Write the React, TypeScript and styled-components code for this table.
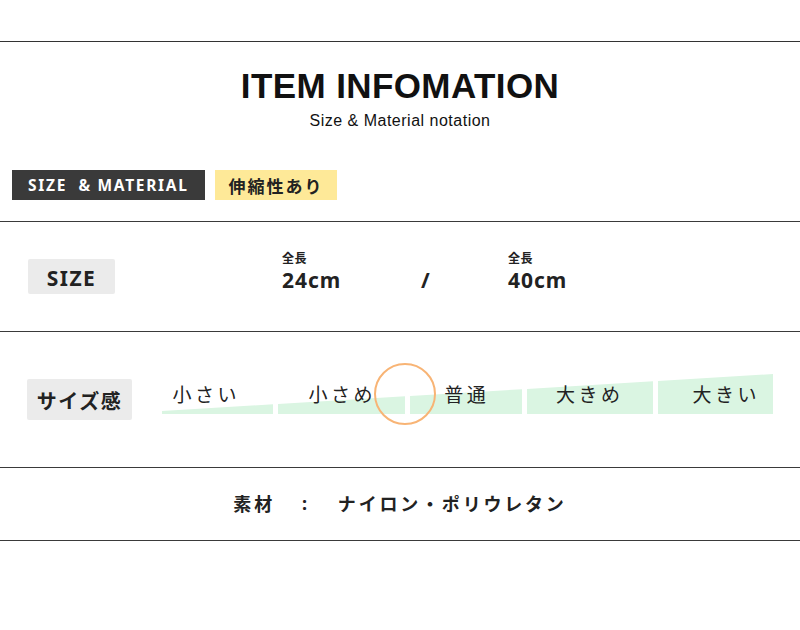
import React from 'react';
import styled, { createGlobalStyle } from 'styled-components';

const GlobalStyle = createGlobalStyle`
  body {
    margin: 0;
    background: #fff;
    font-family: 'Noto Sans', 'Noto Sans CJK JP', sans-serif;
    color: #222;
  }
`;

const Page = styled.div`
  width: 800px;
  padding-top: 41px;
`;

const Header = styled.header`
  border-top: 1px solid #333;
  border-bottom: 1px solid #3a3a3a;
  padding: 26px 0 21px;
`;

const Title = styled.h1`
  margin: 0;
  text-align: center;
  font-family: 'Liberation Sans', Arial, sans-serif;
  font-size: 35px;
  line-height: 1;
  font-weight: 700;
  letter-spacing: 0.4px;
  color: #111;
`;

const Subtitle = styled.p`
  margin: 10px 0 0;
  text-align: center;
  font-family: 'Liberation Sans', Arial, sans-serif;
  font-size: 16px;
  line-height: 1;
  letter-spacing: 0.5px;
  color: #111;
`;

const BadgeRow = styled.div`
  display: flex;
  gap: 10px;
  margin: 41px 0 0 12px;
`;

const Badge = styled.span<{ $tone: 'dark' | 'yellow' }>`
  display: inline-flex;
  align-items: center;
  height: 30px;
  padding: ${(p) => (p.$tone === 'dark' ? '0 16px' : '0 13px 0 14px')};
  background: ${(p) => (p.$tone === 'dark' ? '#3a3a3a' : '#fee998')};
  color: ${(p) => (p.$tone === 'dark' ? '#fff' : '#222')};
  font-weight: 700;
  font-size: ${(p) => (p.$tone === 'dark' ? '15.5px' : '17px')};
  letter-spacing: ${(p) => (p.$tone === 'dark' ? '1.7px' : '2px')};
  white-space: pre;
`;

const Row = styled.section<{ $height: number }>`
  display: flex;
  align-items: center;
  height: ${(p) => p.$height}px;
  border-bottom: 1px solid #3a3a3a;
`;

const Tag = styled.div<{ $width: number; $height: number; $left: number; $size: number }>`
  flex: none;
  display: flex;
  align-items: center;
  justify-content: center;
  width: ${(p) => p.$width}px;
  height: ${(p) => p.$height}px;
  margin-left: ${(p) => p.$left}px;
  padding-top: 2px;
  box-sizing: border-box;
  background: #ebebeb;
  border-radius: 2px;
  font-weight: 700;
  font-size: ${(p) => p.$size}px;
  letter-spacing: 1.5px;
  color: #222;
`;

const Values = styled.div`
  display: grid;
  grid-template-columns: 139px 87px auto;
  align-items: end;
  margin: -9px 0 0 167px;
`;

const Value = styled.div`
  display: flex;
  flex-direction: column;
`;

const ValueLabel = styled.span`
  font-size: 12px;
  font-weight: 700;
  line-height: 16px;
  letter-spacing: 0.5px;
`;

const ValueNumber = styled.span`
  font-size: 21px;
  font-weight: 700;
  line-height: 26px;
  letter-spacing: 1px;
`;

const Slash = styled.span`
  font-size: 21px;
  font-weight: 700;
  line-height: 26px;
`;

const Scale = styled.div`
  position: relative;
  align-self: flex-start;
  width: 611px;
  height: 40px;
  margin: 42px 0 0 30px;
`;

const Wedge = styled.svg`
  position: absolute;
  inset: 0;
`;

const ScaleLabels = styled.div`
  position: relative;
  display: grid;
  grid-template-columns: 111px 127px 112px 126px 115px;
  column-gap: 5px;
  height: 100%;
  align-items: center;
`;

const ScaleLabel = styled.span<{ $shift: number }>`
  justify-self: center;
  transform: translate(${(p) => p.$shift}px, 0);
  font-size: 19px;
  letter-spacing: 3.5px;
  margin-right: -3.5px;
  color: #222;
`;

const Marker = styled.div`
  position: absolute;
  left: 212px;
  top: -11px;
  width: 58px;
  height: 58px;
  border: 2px solid #f8b475;
  border-radius: 50%;
`;

const Material = styled.div`
  display: flex;
  align-items: center;
  justify-content: center;
  width: 100%;
  margin-top: -2px;
  font-weight: 700;
  font-size: 18px;
  letter-spacing: 2.8px;
  color: #222;
`;

const MaterialSep = styled.span`
  margin: 0 28px 0 27px;
`;

const segments: [number, number][] = [
  [0, 111],
  [116, 243],
  [248, 360],
  [365, 491],
  [496, 611],
];

const topAt = (x: number) => 37 - (37 * x) / 611;

const labels = [
  { text: '小さい', shift: -13 },
  { text: '小さめ', shift: -1 },
  { text: '普通', shift: -1 },
  { text: '大きめ', shift: -2 },
  { text: '大きい', shift: 9 },
];

const App = () => {
  return (
    <Page>
      <GlobalStyle />
      <Header>
        <Title>ITEM INFOMATION</Title>
        <Subtitle>Size &amp; Material notation</Subtitle>
        <BadgeRow>
          <Badge $tone="dark">{'SIZE  & MATERIAL'}</Badge>
          <Badge $tone="yellow">伸縮性あり</Badge>
        </BadgeRow>
      </Header>

      <Row $height={109}>
        <Tag $width={87} $height={35} $left={28} $size={21}>
          SIZE
        </Tag>
        <Values>
          <Value>
            <ValueLabel>全長</ValueLabel>
            <ValueNumber>24cm</ValueNumber>
          </Value>
          <Slash>/</Slash>
          <Value>
            <ValueLabel>全長</ValueLabel>
            <ValueNumber>40cm</ValueNumber>
          </Value>
        </Values>
      </Row>

      <Row $height={135}>
        <Tag $width={105} $height={41} $left={27} $size={20}>
          サイズ感
        </Tag>
        <Scale>
          <Wedge width="611" height="40" viewBox="0 0 611 40">
            {segments.map(([a, b]) => (
              <polygon
                key={a}
                points={`${a},40 ${b},40 ${b},${topAt(b)} ${a},${topAt(a)}`}
                fill="#daf5e2"
              />
            ))}
          </Wedge>
          <ScaleLabels>
            {labels.map((l) => (
              <ScaleLabel key={l.text} $shift={l.shift}>
                {l.text}
              </ScaleLabel>
            ))}
          </ScaleLabels>
          <Marker />
        </Scale>
      </Row>

      <Row $height={72}>
        <Material>
          <span>素材</span>
          <MaterialSep>:</MaterialSep>
          <span>ナイロン・ポリウレタン</span>
        </Material>
      </Row>
    </Page>
  );
};

export default App;
